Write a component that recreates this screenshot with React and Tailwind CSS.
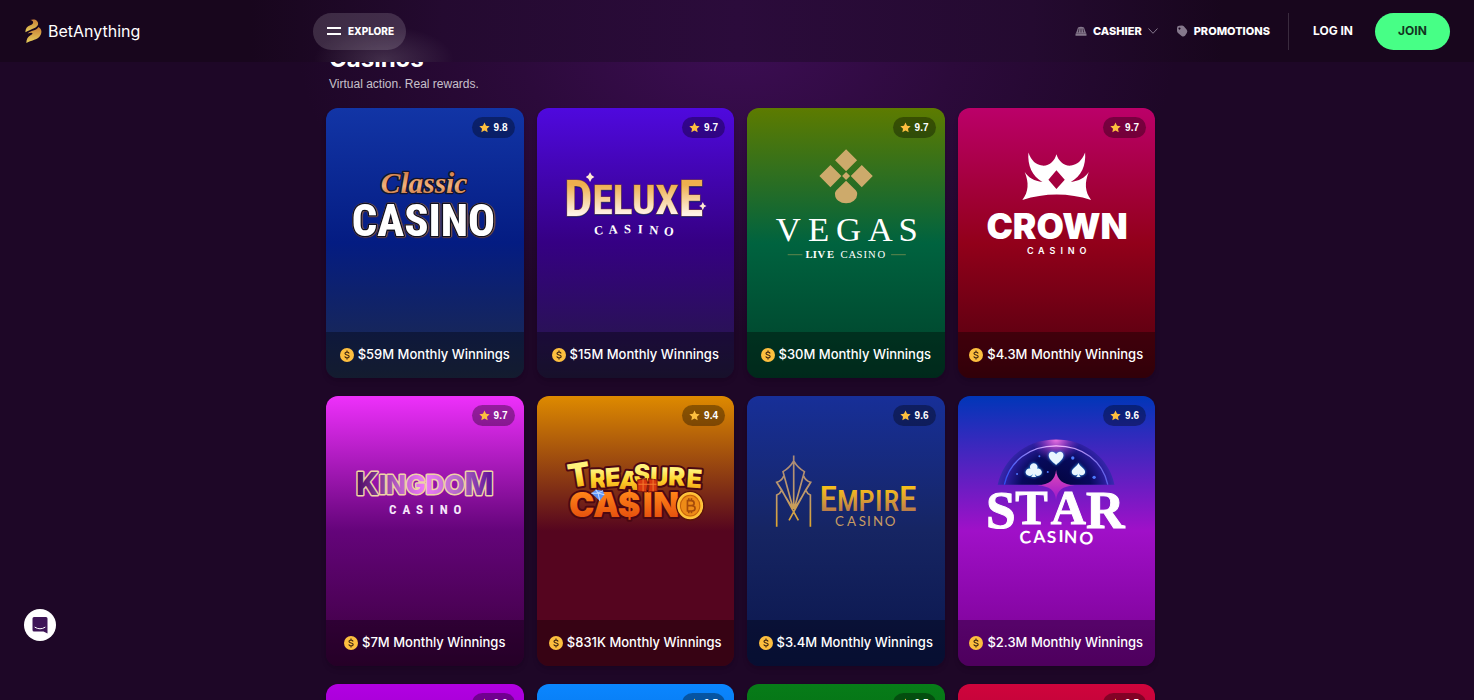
import React from "react";

const SANS = "'Inter', 'Liberation Sans', sans-serif";
const NARROW = "'Roboto Condensed', 'Liberation Sans Narrow', 'Liberation Sans', sans-serif";
const SERIF = "'Liberation Serif', serif";

function ClassicLogo() {
  return (
    <>
      <defs>
        <linearGradient id="classic-copper" x1="0" y1="0" x2="0" y2="1">
          <stop offset="0" stopColor="#c9703a" />
          <stop offset="0.6" stopColor="#f3b27c" />
          <stop offset="1" stopColor="#b8602f" />
        </linearGradient>
      </defs>
      <text x="312" y="404" fontFamily={NARROW} fontWeight="800" fontSize="134" textAnchor="middle" strokeLinejoin="round" fill="#fff" stroke="#10101f" strokeWidth="8" paintOrder="stroke" style={{ filter: "drop-shadow(1px 0 0 #c79572) drop-shadow(1px 1px 0 #6a3322)" }}>CASINO</text>
      <text x="314" y="276" fontFamily={SERIF} fontStyle="italic" fontWeight="700" fontSize="88" textAnchor="middle" fill="url(#classic-copper)" stroke="#14142c" strokeWidth="8" paintOrder="stroke" strokeLinejoin="round">Classic</text>
    </>
  );
}

function DeluxeLogo() {
  return (
    <>
      <defs>
        <linearGradient id="deluxe-gold" x1="0" y1="0" x2="0" y2="1">
          <stop offset="0.25" stopColor="#eeb04e" />
          <stop offset="0.75" stopColor="#fff3e6" />
        </linearGradient>
      </defs>
      <g fontFamily={NARROW} fontWeight="700" fill="url(#deluxe-gold)" stroke="#8a4a3a" strokeWidth="3" paintOrder="stroke">
        <text x="312" y="346" textAnchor="middle" style={{ filter: "drop-shadow(0 3px 0 #0b1a86)" }}><tspan fontSize="150">D</tspan><tspan dy="-6" fontSize="124">ELUX</tspan><tspan dy="6" fontSize="150">E</tspan></text>
      </g>
      <path d="M181 214l5 9 8 5-8 5-5 10-5-10-8-5 8-5zM519 303l4 8 7 4-7 4-4 9-4-9-7-4 7-4z" fill="#ffe9d2" />
      <text x="194 237 283 324 358 401" y="402 399 397 397 399 402" rotate="-6 -4 -1 1 4 6" fontFamily={SERIF} fontWeight="700" fontSize="38" fill="#fff">CASINO</text>
    </>
  );
}

function VegasLogo() {
  return (
    <>
      <g fill="#cdaa6b">
        <path d="M319 145l33 33-33 33-33-33zM272 192l33 33-33 34-33-34zM366 192l33 33-33 34-33-34zM319 213l12 12-12 12-12-12z" />
        <path d="M319 239l29 29c4 5 5 8 4 13a33 26 0 0 1-66 0c-1-5 0-8 4-13z" />
      </g>
      <text x="108 205 289 384 476" y="421" fontFamily={SERIF} fontSize="104" fill="#fff">VEGAS</text>
      <path d="M144 461h44M454 461h44" stroke="#8f9a55" strokeWidth="2" />
      <text x="197 219 233 262 302 326 350 371 385 413" y="471" fontFamily={SERIF} fontSize="32" fill="#fff"><tspan fontWeight="700">LIVE</tspan>CASINO</text>
    </>
  );
}

function CrownLogo() {
  return (
    <>
      <path fillRule="evenodd" fill="#fff" d="M235 155C244 180 258 192 276 194C298 196 314 180 319 160C325 180 341 196 363 194C381 192 395 180 405 155C408 194 394 226 362 243C386 240 405 230 416 213C403 245 404 272 423 297C357 275 283 275 217 297C236 272 237 245 224 213C235 230 253 240 277 243C246 226 232 194 235 155ZM319 208L295 236L319 264L344 236Z" />
      <text x="321" y="413" fontFamily={SANS} fontWeight="900" fontSize="106" textAnchor="middle" fill="#fff">CROWN</text>
      <text x="231 264 298 331 353 388" y="458" fontFamily={SANS} fontWeight="600" fontSize="27" fill="#fff">CASINO</text>
    </>
  );
}

function KingdomLogo() {
  return (
    <>
      <defs>
        <linearGradient id="kingdom-fill">
          <stop offset="0" stopColor="#4b0a63" />
          <stop offset="0.3" stopColor="#b45bc4" />
          <stop offset="0.5" stopColor="#ee7cf8" />
          <stop offset="0.75" stopColor="#b06ac6" />
          <stop offset="1" stopColor="#5b0c94" />
        </linearGradient>
      </defs>
      <text x="316" y="314" fontFamily={SANS} fontWeight="800" fontSize="92" textAnchor="middle" fill="url(#kingdom-fill)" stroke="#efd3a6" strokeWidth="9" paintOrder="stroke" strokeLinejoin="round">K<tspan dy="-4" fontSize="78">INGDO</tspan><tspan dy="4">M</tspan></text>
      <text x="209 249 290 332 361 402" y="369" fontFamily={NARROW} fontWeight="700" fontSize="39" fill="#f6e6fb">CASINO</text>
    </>
  );
}

function TreasureLogo() {
  return (
    <>
      <defs>
        <linearGradient id="treasure-yellow" x1="0" y1="0" x2="0" y2="1">
          <stop offset="0.4" stopColor="#fff27a" />
          <stop offset="0.62" stopColor="#ffd52c" />
          <stop offset="0.9" stopColor="#f09a12" />
        </linearGradient>
        <linearGradient id="treasure-orange" x1="0" y1="0" x2="0" y2="1">
          <stop offset="0.2" stopColor="#ff8418" />
          <stop offset="0.9" stopColor="#e2490c" />
        </linearGradient>
        <radialGradient id="treasure-coin">
          <stop offset="0.55" stopColor="#f08a12" />
          <stop offset="0.75" stopColor="#ffb52a" />
          <stop offset="1" stopColor="#ffd24a" />
        </radialGradient>
      </defs>
      <g fontFamily={SANS} fontWeight="900" stroke="#4b0812" paintOrder="stroke" strokeLinejoin="round">
        <text strokeWidth="12" fill="url(#treasure-yellow)">
          <tspan x="120" y="292" rotate="-9" fontSize="98">T</tspan><tspan x="181 228 266 312 360 415 469" y="292 288 294 276 284 284 290" rotate="-2 -4 4 0 2 2 4" fontSize="76">REASURE</tspan>
        </text>
        <text x="118 190 264 339 370" y="380" fontSize="102" strokeWidth="12" fill="url(#treasure-orange)">CA$IN</text>
      </g>
      <path d="M324 268l26-4 4 14-4 26-26-3zM356 264l26 4v33l-26 3 2-26z" fill="#d8380f" stroke="#8d1c0a" strokeWidth="3" />
      <path d="M326 281h54M340 266v36M370 266v36" stroke="#f47a2c" strokeWidth="3" />
      <path d="M185 308l13-11 22 3 4 12-14 18z" fill="#5d93f7" />
      <path d="M185 308l20-1 19 5M198 297l7 10 15-7M205 307l5 23" fill="none" stroke="#c6dcff" strokeWidth="3" />
      <ellipse cx="481" cy="345" rx="41" ry="43" fill="url(#treasure-coin)" stroke="#5b1208" strokeWidth="4" />
      <ellipse cx="481" cy="345" rx="29" ry="31" fill="#ee8b17" stroke="#c4610c" strokeWidth="3" />
      <path d="M473 329v33M471 330h13c12 0 12 15 0 15h-11h13c13 0 13 16 0 16h-15M477 323v6M485 323v6M477 362v6M485 362v6" fill="none" stroke="#a54b0a" strokeWidth="5" />
    </>
  );
}

function EmpireLogo() {
  return (
    <>
      <defs>
        <linearGradient id="empire-gold" x1="0" y1="0" x2="0" y2="1">
          <stop offset="0.25" stopColor="#f5bd1c" />
          <stop offset="0.8" stopColor="#b87a4c" />
        </linearGradient>
        <linearGradient id="empire-line" gradientUnits="userSpaceOnUse" x1="0" y1="195" x2="0" y2="408">
          <stop offset="0" stopColor="#a98a78" />
          <stop offset="0.6" stopColor="#c09a6a" />
          <stop offset="1" stopColor="#e0a62c" />
        </linearGradient>
      </defs>
      <g fill="none" stroke="url(#empire-line)" strokeWidth="5">
        <path d="M162 195V355M162 211Q150 232 130 243L160 353M162 211Q174 232 194 243L164 353M132 256Q127 270 111 275L126 298L176 389M192 256Q197 270 213 275L198 298L148 389M111 275L157 350M213 275L167 350M126 298Q122 309 111 313V408M198 298Q202 309 212 313V408" />
      </g>
      <text y="362" fontFamily={NARROW} fontWeight="500" fill="url(#empire-gold)"><tspan x="239" fontSize="107">E</tspan><tspan x="292 356 406 431" fontSize="86">MPIR</tspan><tspan x="478" fontSize="107">E</tspan></text>
      <text x="286 322 357 382 400 435" y="407" fontFamily="'Lato', sans-serif" fontSize="40" fill="#c79c63">CASINO</text>
    </>
  );
}

function StarLogo() {
  return (
    <>
      <defs>
        <radialGradient id="star-dome" gradientUnits="userSpaceOnUse" cx="318" cy="300" r="176">
          <stop offset="0" stopColor="#02043a" />
          <stop offset="0.6" stopColor="#070a5c" />
          <stop offset="0.85" stopColor="#2a1d9c" />
          <stop offset="1" stopColor="#3a2ab0" />
        </radialGradient>
        <radialGradient id="star-top" gradientUnits="userSpaceOnUse" cx="318" cy="145" r="120">
          <stop offset="0" stopColor="#f478e4" />
          <stop offset="0.25" stopColor="#d455dc" stopOpacity="0.6" />
          <stop offset="0.6" stopColor="#8a30d0" stopOpacity="0" />
        </radialGradient>
        <linearGradient id="star-ring">
          <stop offset="0" stopColor="#2f4df2" />
          <stop offset="0.5" stopColor="#ffc0ff" />
          <stop offset="1" stopColor="#5a5ce8" />
        </linearGradient>
        <linearGradient id="star-spark" x1="0" y1="0" x2="0" y2="1">
          <stop offset="0" stopColor="#e04bb8" />
          <stop offset="1" stopColor="#9c18cc" />
        </linearGradient>
      </defs>
      <path d="M143 282C160 202 230 147 318 147S476 202 493 282Z" fill="url(#star-dome)" />
      <path d="M143 282C160 202 230 147 318 147S476 202 493 282Z" fill="url(#star-top)" />
      <path d="M163 282C178 212 238 166 318 166S458 212 473 282" fill="none" stroke="url(#star-ring)" strokeWidth="4" />
      <path d="M318 238C315 268 298 282 262 284C300 288 314 298 318 328C322 298 336 288 374 284C338 282 321 268 318 238Z" fill="url(#star-spark)" />
      <g fill="#e9f6ff" style={{ filter: "drop-shadow(0 0 5px #30a8ff)" }}>
        <path d="M318 223C306 212 296 205 296 194C296 181 312 180 318 191C324 180 340 181 340 194C340 205 330 212 318 223Z" />
        <path d="M251 218a11 11 0 0 1 10 16a11 11 0 1 1-7 15q1 7 5 10h-16q4-3 5-10a11 11 0 1 1-7-15a11 11 0 0 1 10-16z" />
        <path d="M385 217C391 229 405 234 405 244C405 254 392 257 387 249q1 7 5 10h-14q4-3 5-10C378 257 365 254 365 244C365 234 379 229 385 217Z" />
      </g>
      <g fill="#4d79ff">
        <circle cx="368" cy="202" r="5" /><circle cx="432" cy="260" r="5" />
        <circle cx="201" cy="250" r="3" /><circle cx="268" cy="197" r="3" /><circle cx="293" cy="244" r="3" />
      </g>
      <text fontFamily={SERIF} fontWeight="700" fill="#fff" stroke="#fff" strokeWidth="3">
        <tspan x="108" y="411" fontSize="160">S</tspan><tspan x="196 302" y="401" fontSize="146">TA</tspan><tspan x="408" y="412" fontSize="160">R</tspan>
      </text>
      <text x="210 250 290 325 341 386" y="460 457 456 455 456 459" rotate="-5 -3 0 0 2 5" fontFamily="'Lato', sans-serif" fontWeight="700" fontSize="52" fill="#fff">CASINO</text>
    </>
  );
}

const CASINOS = [
  { name: "Classic Casino", rating: "9.8", winnings: "$59M", view: "20 22 592 670", Logo: ClassicLogo, bg: "from-[#1235a6] via-[#041c82] to-[#1f2b49]" },
  { name: "Deluxe Casino", rating: "9.7", winnings: "$15M", view: "22 22 592 670", Logo: DeluxeLogo, bg: "from-[#4f09de] via-[#350083] to-[#241a42]" },
  { name: "Vegas Live Casino", rating: "9.7", winnings: "$30M", view: "22 22 592 670", Logo: VegasLogo, bg: "from-[#5d7b00] via-[#00633f] to-[#00402a]" },
  { name: "Crown Casino", rating: "9.7", winnings: "$4.3M", view: "24 22 592 670", Logo: CrownLogo, bg: "from-[#bb0069] via-[#92001a] to-[#4c000e]" },
  { name: "Kingdom Casino", rating: "9.7", winnings: "$7M", view: "20 17 592 670", Logo: KingdomLogo, bg: "from-[#ee30fb] via-[#64047a] to-[#3a003c]" },
  { name: "Treasure Casino", rating: "9.4", winnings: "$831K", view: "22 17 592 670", Logo: TreasureLogo, bg: "from-[#de8a00] via-[#55051f] to-[#55051f]" },
  { name: "Empire Casino", rating: "9.6", winnings: "$3.4M", view: "22 17 592 670", Logo: EmpireLogo, bg: "from-[#172f98] via-[#162563] to-[#0b164c]" },
  { name: "Star Casino", rating: "9.6", winnings: "$2.3M", view: "24 17 592 670", Logo: StarLogo, bg: "from-[#0036b8] via-[#a010c8] to-[#780090]" },
  { name: "Violet Casino", rating: "9.6", winnings: "$2.1M", bg: "from-[#b200e2] via-[#7c00a8] to-[#4a0070]" },
  { name: "Azure Casino", rating: "9.5", winnings: "$1.9M", bg: "from-[#0a86ff] via-[#0459c0] to-[#023a80]" },
  { name: "Emerald Casino", rating: "9.5", winnings: "$1.6M", bg: "from-[#077c18] via-[#045812] to-[#02380c]" },
  { name: "Ruby Casino", rating: "9.5", winnings: "$1.2M", bg: "from-[#d0043c] via-[#8c0430] to-[#54021c]" },
];

function Star() {
  return (
    <svg viewBox="0 0 20 20" className="size-[11px] shrink-0" fill="#fdbf3f" aria-hidden="true">
      <path d="M10 .8l2.800 6.100 6.600.8-4.900 4.500 1.300 6.600L10 15.500l-5.800 3.300 1.300-6.600L.6 7.700l6.600-.8z" />
    </svg>
  );
}

function Coin() {
  return (
    <svg viewBox="0 0 14 14" className="size-[14px] shrink-0" aria-hidden="true">
      <circle cx="7" cy="7" r="7" fill="#fdbf3f" />
      <path d="M9.100 5.500C8.900 4.600 8.100 4.200 7 4.200C5.900 4.200 5 4.700 5 5.600C5 7.500 9.200 6.500 9.200 8.400C9.200 9.300 8.200 9.800 7.100 9.800C5.900 9.800 5 9.300 4.800 8.400M7 2.600V4.300M7 9.800V11.500" fill="none" stroke="#4a2e14" strokeWidth="1.200" />
    </svg>
  );
}

function CasinoCard({ name, rating, winnings, view, Logo, bg }) {
  return (
    <a href="#" aria-label={name} className={`relative flex flex-col overflow-hidden rounded-xl bg-linear-to-b/srgb shadow-md ${bg}`}>
      <span className="absolute top-[9px] right-[9px] flex h-[21px] items-center gap-1 rounded-full bg-black/35 px-[7px] font-['Liberation_Sans',sans-serif] text-[10px] font-bold text-white">
        <Star />
        {rating}
      </span>
      <div className="h-56">
        {Logo && (
          <svg viewBox={view} className="block h-full w-full" role="img" aria-label={name}>
            <Logo />
          </svg>
        )}
      </div>
      <div className="flex h-[46px] items-center justify-center gap-1 bg-black/35 text-[13px] font-medium text-white">
        <Coin />
        <span className="whitespace-nowrap">{winnings} Monthly Winnings</span>
      </div>
    </a>
  );
}

function Header() {
  return (
    <header className="sticky top-0 z-10 flex h-[62px] shrink-0 items-center bg-[#18061d] bg-[radial-gradient(ellipse_70px_34px_at_384px_60px,rgba(255,255,255,0.15),transparent),linear-gradient(90deg,#18061d_17%,#240a30_30%,#2b0b3b_50%,#240a30_70%,#18061d_83%)] px-6 text-white">
      <a href="#" className="flex w-[289px] items-center gap-[5px] text-base">
        <svg viewBox="74 50 56 80" className="h-[26px] w-[19px]" aria-hidden="true">
          <defs>
            <linearGradient id="brand-gold" x1="0" y1="0" x2="0" y2="1">
              <stop offset="0" stopColor="#c97f35" />
              <stop offset="1" stopColor="#e6cf5c" />
            </linearGradient>
          </defs>
          <g fill="url(#brand-gold)">
            <path d="M92 56C106 51 118 58 116 70C114 80 98 83 77 94C77 82 82 76 92 72C104 68 104 58 92 56Z" />
            <path d="M117 78C130 84 129 101 118 110C107 119 92 119 80 127C80 115 84 108 94 102C104 97 98 92 84 98C92 88 112 90 117 78Z" />
          </g>
        </svg>
        BetAnything
      </a>
      <button type="button" className="flex h-[37px] items-center gap-[7px] rounded-full bg-white/15 pr-3 pl-[14px] text-[10px] font-extrabold">
        <svg viewBox="0 0 14 10" className="h-[10px] w-[14px]" stroke="#fff" strokeWidth="2" aria-hidden="true">
          <path d="M0 2h14M0 8h14" />
        </svg>
        EXPLORE
      </button>
      <nav className="ml-auto flex items-center text-[11px] font-extrabold">
        <button type="button" className="mr-[18px] flex items-center gap-[6px]">
          <svg viewBox="0 0 12 12" className="size-3" fill="#85788c" aria-hidden="true">
            <path d="M3 2.500Q6 .8 9 2.500l2 5.700H1zM.5 8.600h11v2.200H.5z" />
            <path d="M4 3.500L3.300 7.500M6 3.500v4M8 3.500l.7 4" stroke="#241029" strokeWidth=".7" />
          </svg>
          CASHIER
          <svg viewBox="0 0 10 6" className="h-[6px] w-[10px]" fill="none" stroke="#85788c" aria-hidden="true">
            <path d="M.5.500L5 5.300L9.500.500" />
          </svg>
        </button>
        <a href="#" className="flex items-center gap-[6px]">
          <svg viewBox="0 0 12 12" className="size-3" fill="#85788c" aria-hidden="true">
            <path fillRule="evenodd" d="M1 3Q1 .8 3.200.8L6 .6Q7 .6 7.800 1.300L10.600 4.400Q12 6.300 10.800 8L9 10.700Q7.500 12 5.600 10.900L2 8Q1 7 1 5.500ZM3.500 2.500a1 1 0 1 0 .01 0Z" />
          </svg>
          PROMOTIONS
        </a>
        <span className="mx-[18px] h-[37px] w-px bg-white/15" />
        <a href="#" className="px-[6px] text-xs font-bold">LOG IN</a>
        <a href="#" className="ml-4 flex h-[37px] w-[75px] items-center justify-center rounded-full bg-[#47ff86] text-xs font-bold text-[#12351f]">JOIN</a>
      </nav>
    </header>
  );
}

export default function App() {
  return (
    <div
      className="relative h-screen bg-[#1e0727] bg-[radial-gradient(ellipse_440px_300px_at_50%_5%,#3d0d55_0%,#2c0a3b_50%,transparent_100%)] text-white"
      style={{ fontFamily: SANS }}
    >
      <div className="flex h-full flex-col overflow-y-auto [scrollbar-width:none]">
        <Header />
        <main className="mx-auto -mt-5 w-full max-w-[836px] pl-[7px]">
          <div className="px-[3px]">
            <h1 className="text-2xl leading-[34px] font-bold">Casinos</h1>
            <p className="font-['Liberation_Sans',sans-serif] text-xs text-white/75">Virtual action. Real rewards.</p>
          </div>
          <div className="mt-4 grid grid-cols-2 gap-x-[13px] gap-y-[18px] pb-10 md:grid-cols-4">
            {CASINOS.map((casino) => (
              <CasinoCard key={casino.name} {...casino} />
            ))}
          </div>
        </main>
      </div>
      <button
        type="button"
        aria-label="Open chat"
        className="fixed bottom-[59px] left-6 z-10 flex size-8 items-center justify-center rounded-full bg-white"
      >
        <svg viewBox="0 0 16 18" className="h-[18px] w-4" aria-hidden="true">
          <path d="M2 1h12q1.500 0 1.500 1.500V17.500L11.500 15.500H2Q.5 15.500.5 14V2.500Q.5 1 2 1Z" fill="#3d1456" />
          <path d="M3 11.300Q8 14.500 13 11.300" fill="none" stroke="#fff" strokeWidth="1" strokeLinecap="round" />
        </svg>
      </button>
    </div>
  );
}
